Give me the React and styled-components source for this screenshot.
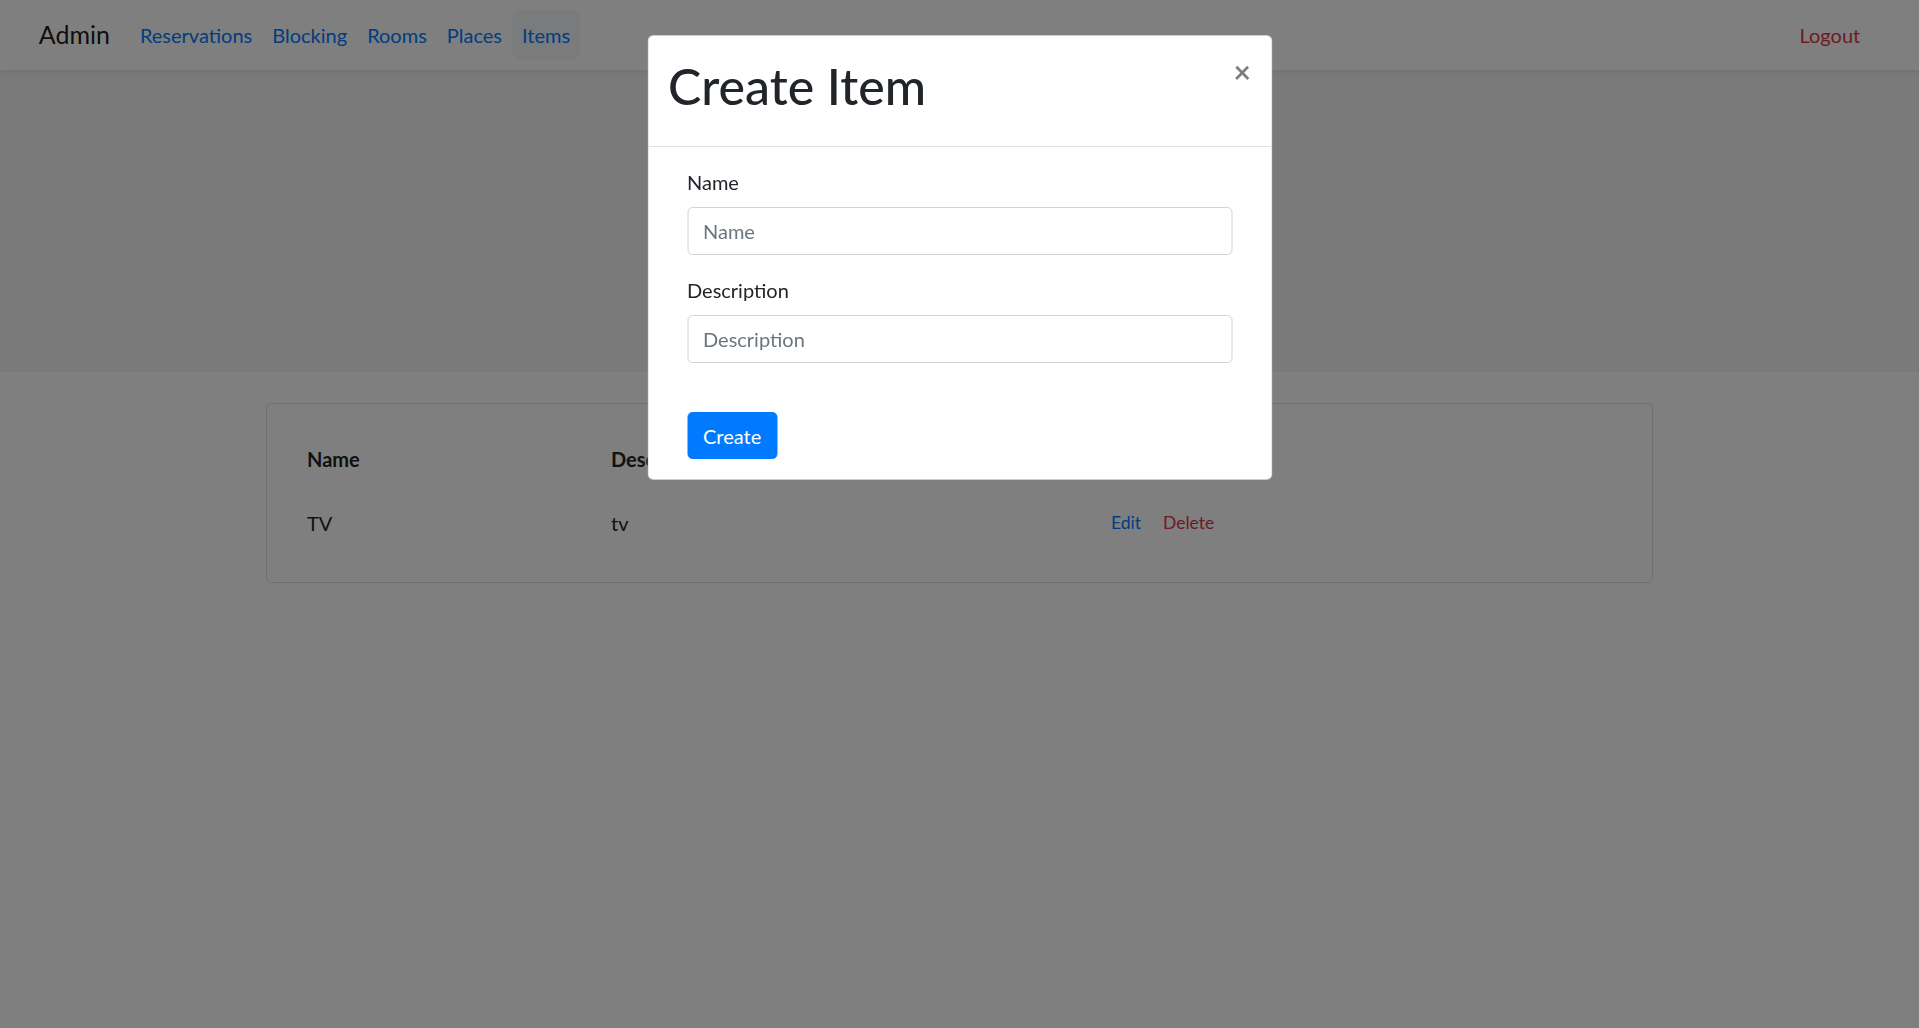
import React from 'react';
import styled, { createGlobalStyle } from 'styled-components';

const GlobalStyle = createGlobalStyle`
  html, body {
    margin: 0;
    padding: 0;
  }
  body {
    background: #fff;
    color: #212529;
    font-family: "Segoe UI", Lato, "Liberation Sans", sans-serif;
    font-size: 20px;
    line-height: 1.5;
    min-height: 1028px;
  }
  * {
    box-sizing: border-box;
  }
`;

const Navbar = styled.nav`
  height: 70px;
  padding: 10px 20px;
  background: #fff;
  box-shadow: 0 2.5px 5px rgba(0, 0, 0, 0.075);
  position: relative;
  z-index: 1;
`;

const NavInner = styled.div`
  display: flex;
  align-items: center;
  height: 100%;
  padding: 0 18.75px;
`;

const Brand = styled.a`
  font-size: 25px;
  line-height: 37.5px;
  color: rgba(0, 0, 0, 0.9);
  margin-right: 20px;
  text-decoration: none;
`;

const NavLinks = styled.div`
  display: flex;
  align-items: center;
  flex: 1;
`;

const NavLink = styled.a`
  padding: 10px 10px;
  line-height: 30px;
  border-radius: 8px;
  color: ${(p) => (p.$danger ? '#dc3545' : '#007bff')};
  background: ${(p) => (p.$active ? '#f2f6fb' : 'transparent')};
  text-decoration: none;
  margin-right: ${(p) => (p.$danger ? '10px' : '0')};
`;

const Jumbotron = styled.div`
  height: 302px;
  background: #f5f5f5;
  margin-bottom: 31px;
`;

const Container = styled.div`
  max-width: 1425px;
  margin: 0 auto;
  padding: 0 19px;
`;

const Card = styled.div`
  border: 1px solid rgba(0, 0, 0, 0.125);
  border-radius: 5px;
  padding: 25px;
`;

const Table = styled.div`
  display: grid;
  grid-template-columns: 304px 489px 1fr;
`;

const Cell = styled.div`
  padding: 15px;
  font-weight: ${(p) => (p.$head ? 700 : 400)};
  display: flex;
  align-items: center;
`;

const LinkButton = styled.button`
  font-family: inherit;
  font-size: 17.5px;
  line-height: 1.5;
  padding: 5px 10px;
  border: 1px solid transparent;
  background: none;
  color: ${(p) => (p.$danger ? '#dc3545' : '#007bff')};
  cursor: pointer;
`;

const Backdrop = styled.div`
  position: fixed;
  inset: 0;
  background: rgba(0, 0, 0, 0.5);
  z-index: 10;
`;

const Modal = styled.div`
  position: fixed;
  top: 35px;
  left: 50%;
  transform: translateX(-50%);
  width: 625px;
  background: #fff;
  border: 1px solid rgba(0, 0, 0, 0.2);
  border-radius: 6px;
  z-index: 20;
`;

const ModalHeader = styled.div`
  display: flex;
  align-items: flex-start;
  justify-content: space-between;
  padding: 20px;
  border-bottom: 1px solid #dee2e6;
`;

const ModalTitle = styled.h1`
  margin: 0 0 10px;
  font-size: 50px;
  font-weight: 500;
  line-height: 1.2;
  color: #212529;
`;

const CloseButton = styled.button`
  margin: -20px -20px -20px auto;
  padding: 20px;
  border: 0;
  background: transparent;
  font-family: inherit;
  font-size: 30px;
  font-weight: 700;
  line-height: 1;
  color: #000;
  opacity: 0.5;
  cursor: pointer;
`;

const ModalBody = styled.div`
  padding: 20px;
`;

const Form = styled.form`
  padding: 0 19px;
`;

const FormGroup = styled.div`
  margin-bottom: 20px;
`;

const Label = styled.label`
  display: block;
  margin-bottom: 10px;
  line-height: 30px;
`;

const Input = styled.input`
  display: block;
  width: 100%;
  height: 48px;
  padding: 7.5px 15px;
  font-family: inherit;
  font-size: 20px;
  color: #495057;
  border: 1px solid #ced4da;
  border-radius: 5px;
  outline: none;

  &::placeholder {
    color: #6c757d;
  }
`;

const PrimaryButton = styled.button`
  margin-top: 29px;
  padding: 7.5px 15px;
  font-family: inherit;
  font-size: 20px;
  line-height: 30px;
  color: #fff;
  background: #007bff;
  border: 1px solid #007bff;
  border-radius: 5px;
  cursor: pointer;
`;

const items = [{ name: 'TV', description: 'tv' }];

export default function App() {
  return (
    <>
      <GlobalStyle />
      <Navbar>
        <NavInner>
          <Brand href="#">Admin</Brand>
          <NavLinks>
            <NavLink href="#">Reservations</NavLink>
            <NavLink href="#">Blocking</NavLink>
            <NavLink href="#">Rooms</NavLink>
            <NavLink href="#">Places</NavLink>
            <NavLink href="#" $active>Items</NavLink>
          </NavLinks>
          <NavLink href="#" $danger>Logout</NavLink>
        </NavInner>
      </Navbar>
      <Jumbotron />
      <Container>
        <Card>
          <Table>
            <Cell $head>Name</Cell>
            <Cell $head>Description</Cell>
            <Cell $head />
            {items.map((item) => (
              <React.Fragment key={item.name}>
                <Cell>{item.name}</Cell>
                <Cell>{item.description}</Cell>
                <Cell>
                  <LinkButton>Edit</LinkButton>
                  <LinkButton $danger>Delete</LinkButton>
                </Cell>
              </React.Fragment>
            ))}
          </Table>
        </Card>
      </Container>

      <Backdrop />
      <Modal>
        <ModalHeader>
          <ModalTitle>Create Item</ModalTitle>
          <CloseButton aria-label="Close">×</CloseButton>
        </ModalHeader>
        <ModalBody>
          <Form onSubmit={(e) => e.preventDefault()}>
            <FormGroup>
              <Label>Name</Label>
              <Input placeholder="Name" />
            </FormGroup>
            <FormGroup>
              <Label>Description</Label>
              <Input placeholder="Description" />
            </FormGroup>
            <PrimaryButton type="submit">Create</PrimaryButton>
          </Form>
        </ModalBody>
      </Modal>
    </>
  );
}
